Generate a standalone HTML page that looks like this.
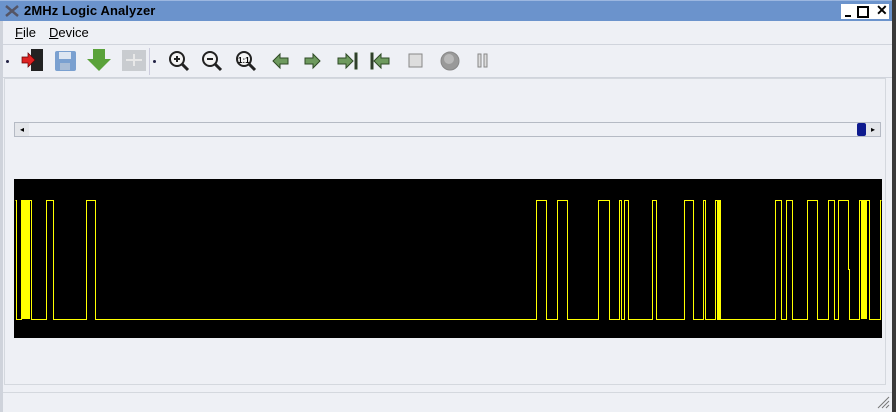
<!DOCTYPE html>
<html><head><style>
body{margin:0;width:896px;height:412px;background:#eff1f6;font-family:"Liberation Sans",sans-serif;position:relative;overflow:hidden}
.a{position:absolute}
</style></head><body>
<div class="a" style="left:0;top:0;width:896px;height:412px;background:#eef0f5"></div>
<div class="a" style="left:0;top:0;width:3px;height:412px;background:#cfd3db"></div>
<div class="a" style="left:892px;top:0;width:4px;height:412px;background:#3a3a3a"></div>
<div class="a" style="left:0;top:0;width:892px;height:20px;background:#6b93cc;border-top:1px solid #9cb7e0"></div>
<svg class="a" style="left:4px;top:3px" width="16" height="16"><path d="M2 3 L14 13 M14 3 L2 13" stroke="#556" stroke-width="2.5"/></svg>
<div class="a" style="left:24px;top:3px;font-size:13px;font-weight:bold;color:#000;letter-spacing:0.1px">2MHz Logic Analyzer</div>
<div class="a" style="left:841px;top:4px;width:48px;height:15px;background:#fff"></div>
<div class="a" style="left:845px;top:15px;width:6px;height:2px;background:#000"></div>
<div class="a" style="left:857px;top:6px;width:8px;height:8px;border:2px solid #000;border-top-width:2px"></div>
<div class="a" style="left:876px;top:2px;font-size:14px;font-weight:bold">✕</div>
<div class="a" style="left:15px;top:25px;font-size:13px"><u>F</u>ile</div>
<div class="a" style="left:49px;top:25px;font-size:13px"><u>D</u>evice</div>
<div class="a" style="left:3px;top:44px;width:889px;height:1px;background:#d0d4dc"></div>
<div class="a" style="left:3px;top:77px;width:889px;height:1px;background:#d0d4dc"></div>
<div class="a" style="left:6px;top:60px;width:3px;height:3px;background:#224;border-radius:50%"></div>
<div class="a" style="left:153px;top:60px;width:3px;height:3px;background:#224;border-radius:50%"></div>
<div class="a" style="left:149px;top:48px;width:1px;height:27px;background:#ccd"></div>
<svg class="a" style="left:0;top:46px" width="500" height="30">
<rect x="31" y="3" width="12" height="22" fill="#222"/><path d="M22 11h6v-4l7 7-7 7v-4h-6z" fill="#d22" stroke="#600" stroke-width="0.7"/>
<rect x="55" y="5" width="21" height="20" rx="2" fill="#7aa0d0"/><rect x="59" y="6" width="12" height="7" fill="#dde6f2"/><rect x="60" y="17" width="10" height="7" fill="#a8bcd6"/>
<path d="M93 3h12v10h6l-12 12-12-12h6z" fill="#5aa23a"/>
<rect x="122" y="4" width="24" height="21" fill="#c9ccd0"/><path d="M126 14h16M134 8v12" stroke="#e8e8e8" stroke-width="2"/>
<g fill="none" stroke="#222" stroke-width="2"><circle cx="177" cy="13" r="7" fill="#f4f4f4"/><path d="M182 18l6 6" stroke-width="3"/><path d="M174 13h6M177 10v6"/>
<circle cx="210" cy="13" r="7" fill="#f4f4f4"/><path d="M215 18l6 6" stroke-width="3"/><path d="M207 13h6"/>
<circle cx="244" cy="13" r="7" fill="#f4f4f4"/><path d="M249 18l6 6" stroke-width="3"/></g>
<text x="238" y="17" font-size="8" font-weight="bold" font-family="Liberation Sans">1:1</text>
<g fill="#6e9a5e" stroke="#2e4a25" stroke-width="1">
<path d="M273 15l7-7v4h8v6h-8v4z"/>
<path d="M320 15l-7-7v4h-8v6h8v4z"/>
<path d="M353 15l-7-7v4h-8v6h8v4z"/><rect x="355" y="7" width="2" height="16" fill="#333"/>
<path d="M374 15l7-7v4h8v6h-8v4z"/><rect x="371" y="7" width="2" height="16" fill="#333"/></g>
<rect x="409" y="8" width="13" height="13" fill="#ddd" stroke="#888"/>
<circle cx="450" cy="15" r="9" fill="#999" stroke="#888"/><circle cx="449" cy="13" r="5" fill="#b8b8b8"/>
<rect x="478" y="8" width="3" height="13" fill="#ddd" stroke="#888"/><rect x="484" y="8" width="3" height="13" fill="#ddd" stroke="#888"/>
</svg>
<div class="a" style="left:4px;top:78px;width:882px;height:307px;border:1px solid #d4d8de;box-sizing:border-box"></div>
<div class="a" style="left:14px;top:122px;width:867px;height:15px;border:1px solid #b5bac4;background:#eef0f5;box-sizing:border-box"></div>
<div class="a" style="left:15px;top:123px;width:14px;height:13px;background:#e4e6ea;font-size:8px;text-align:center;line-height:13px">◂</div>
<div class="a" style="left:866px;top:123px;width:14px;height:13px;background:#e4e6ea;font-size:8px;text-align:center;line-height:13px">▸</div>
<div class="a" style="left:857px;top:123px;width:9px;height:13px;background:#0e1a8e;border-radius:2px"></div>
<svg class="a" style="left:14px;top:179px" width="868" height="159" shape-rendering="crispEdges">
<rect width="868" height="159" fill="#000"/>
<g fill="#ffff00"><rect x="8" y="21" width="8" height="119"/><rect x="847" y="21" width="6" height="119"/><rect x="704" y="21" width="3" height="119"/></g>
<polyline fill="none" stroke="#ffff00" stroke-width="1" points="1.5,21.5 2.5,21.5 2.5,140.5 7.5,140.5 7.5,21.5 17.5,21.5 17.5,140.5 32.5,140.5 32.5,21.5 39.5,21.5 39.5,140.5 72.5,140.5 72.5,21.5 81.5,21.5 81.5,140.5 522.5,140.5 522.5,21.5 532.5,21.5 532.5,140.5 543.5,140.5 543.5,21.5 553.5,21.5 553.5,140.5 584.5,140.5 584.5,21.5 595.5,21.5 595.5,140.5 605.5,140.5 605.5,21.5 607.5,21.5 607.5,140.5 610.5,140.5 610.5,21.5 614.5,21.5 614.5,140.5 638.5,140.5 638.5,21.5 642.5,21.5 642.5,140.5 670.5,140.5 670.5,21.5 679.5,21.5 679.5,140.5 689.5,140.5 689.5,21.5 691.5,21.5 691.5,140.5 701.5,140.5 701.5,21.5 703.5,21.5 703.5,140.5 761.5,140.5 761.5,21.5 767.5,21.5 767.5,140.5 772.5,140.5 772.5,21.5 778.5,21.5 778.5,140.5 793.5,140.5 793.5,21.5 803.5,21.5 803.5,140.5 814.5,140.5 814.5,21.5 820.5,21.5 820.5,140.5 824.5,140.5 824.5,21.5 834.5,21.5 834.5,90.5 835.5,90.5 835.5,140.5 845.5,140.5 845.5,21.5 855.5,21.5 855.5,140.5 866.5,140.5 866.5,21.5 867.5,21.5"/>
</svg>
<div class="a" style="left:3px;top:392px;width:889px;height:1px;background:#d4d8de"></div>
<svg class="a" style="left:876px;top:395px" width="14" height="14"><path d="M2 13L13 2M6 13L13 6M10 13L13 10" stroke="#777"/></svg>
</body></html>
